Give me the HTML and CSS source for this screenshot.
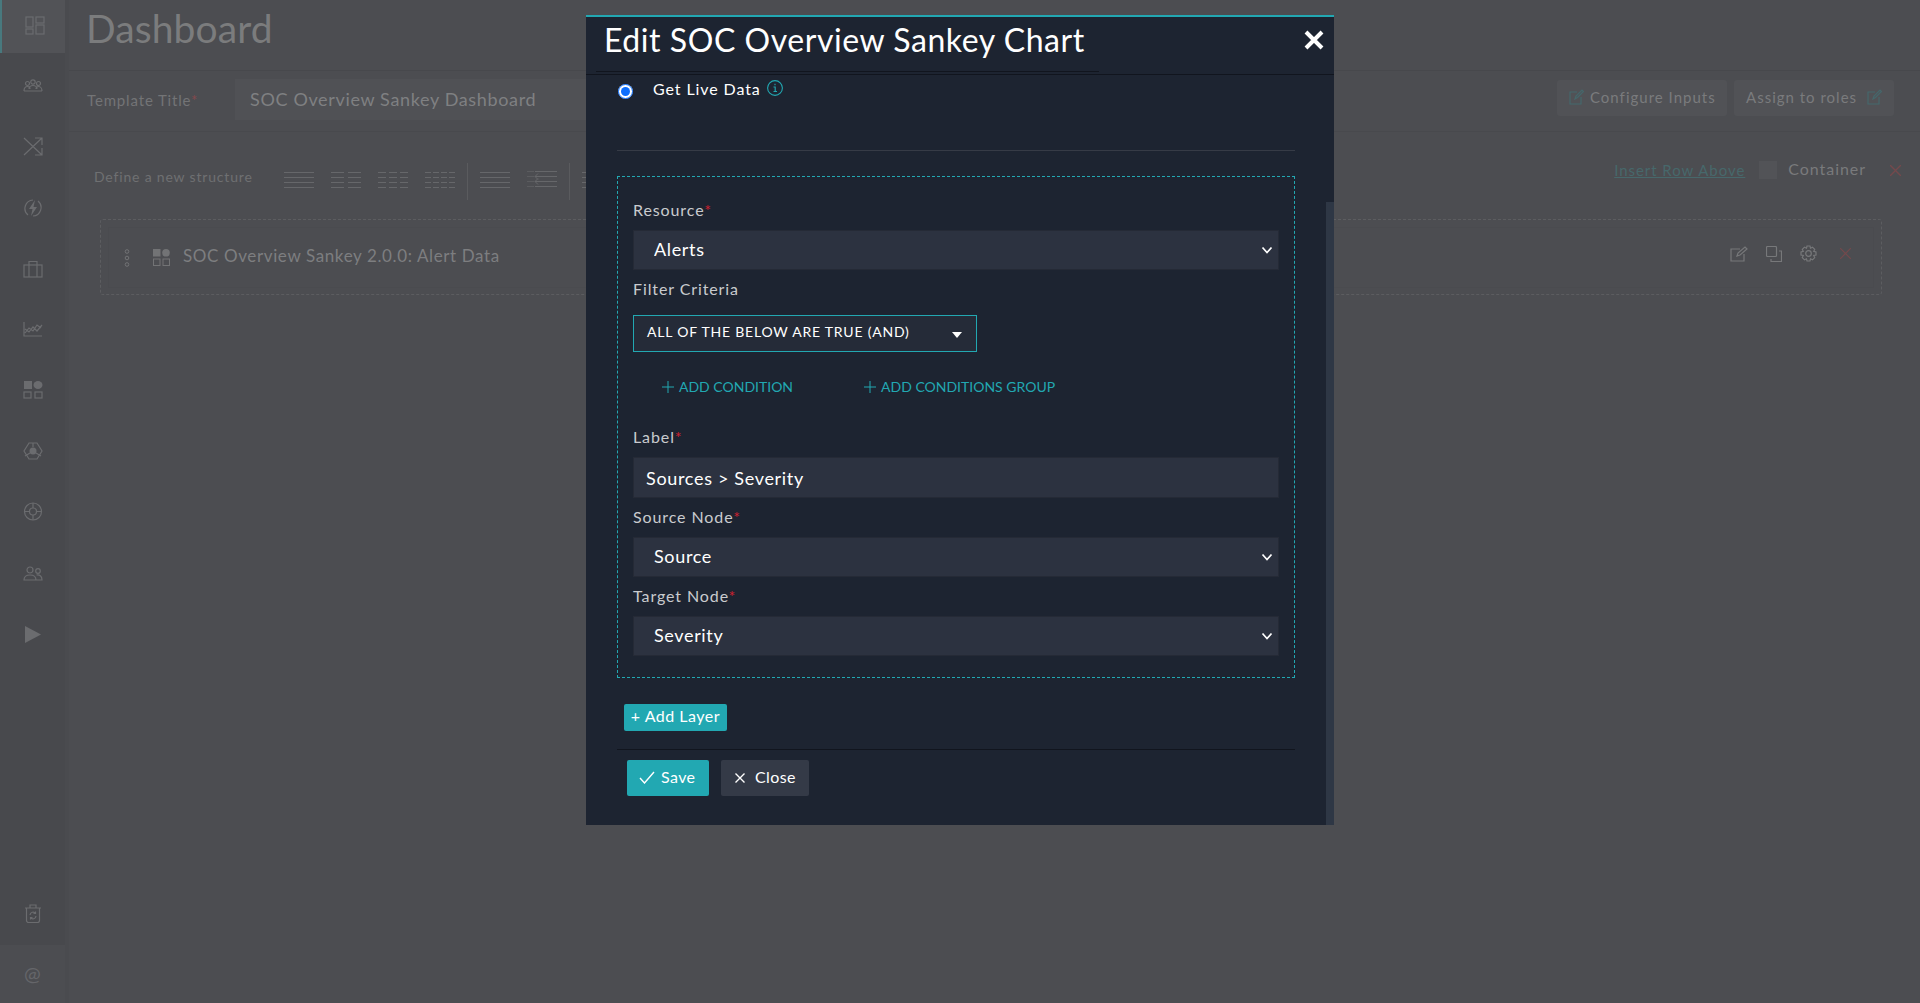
FILE: index.html
```html
<!DOCTYPE html>
<html>
<head>
    <title>Edit SOC Overview Sankey Chart</title>
    <link rel="stylesheet" href="styles.css">
</head>
<body>
    <div class="app">
        <nav class="sidebar">
            <a class="nav-item nav-active">
                <svg width="20" height="19" viewBox="0 0 20 19"><rect x="1" y="1" width="7" height="10"/><rect x="11" y="1" width="8" height="6"/><rect x="1" y="13" width="7" height="5"/><rect x="11" y="9" width="8" height="9"/></svg>
            </a>
            <a class="nav-item">
                <svg width="20" height="13" viewBox="0 0 20 13"><circle cx="10" cy="3" r="2.2"/><circle cx="4.5" cy="4.5" r="2"/><circle cx="15.500" cy="4.500" r="2"/><path d="M1 12c0-3 1.500-4.500 3.500-4.500S7 8.500 7 10M13 10c0-1.500 1-2.500 2.500-2.500S19 9 19 12M6 10c0-2 2-3.500 4-3.500S14 8 14 10M1 12h18"/></svg>
            </a>
            <a class="nav-item">
                <svg width="20" height="19" viewBox="0 0 20 19"><path d="M1 1l18 17M1 18L19 1M12 1h7v7M12 18h7v-7"/></svg>
            </a>
            <a class="nav-item">
                <svg width="20" height="20" viewBox="0 0 20 20"><path d="M5 17a8.500 8.500 0 0 1 5-15M15 3a8.500 8.500 0 0 1-5 15"/><path class="solid" d="M12 2L6 11h3.500L8 18l6-9h-3.500z"/></svg>
            </a>
            <a class="nav-item">
                <svg width="20" height="18" viewBox="0 0 20 18"><rect x="1" y="5" width="18" height="12"/><path d="M6 17V1.500h8V17"/></svg>
            </a>
            <a class="nav-item nav-up">
                <svg width="20" height="16" viewBox="0 0 20 16"><path d="M1 1v14h18M2 12l4-5 4 3 4-6 4 3M2 8l4 3 4-5 4 4 5-6"/></svg>
            </a>
            <a class="nav-item nav-up">
                <svg width="20" height="19" viewBox="0 0 20 19"><rect class="solid" x="1" y="1" width="8" height="8"/><ellipse class="solid" cx="15" cy="5" rx="4.500" ry="4"/><rect x="1" y="12" width="7" height="6"/><rect x="12" y="12" width="7" height="6"/></svg>
            </a>
            <a class="nav-item nav-up">
                <svg width="20" height="18" viewBox="0 0 20 18"><path d="M6 1h8l5 8-5 8H6L1 9z"/><circle class="solid" cx="10" cy="9" r="3.500"/><path d="M10 1v4M2 14l5-3M18 14l-5-3"/></svg>
            </a>
            <a class="nav-item nav-up">
                <svg width="20" height="19" viewBox="0 0 20 19"><circle cx="10" cy="9.500" r="8.500"/><circle cx="10" cy="9.500" r="3.500"/><path d="M10 1v5M10 13v5M1.500 9.500h5M13.500 9.500h5"/></svg>
            </a>
            <a class="nav-item">
                <svg width="20" height="15" viewBox="0 0 20 15"><circle cx="7" cy="4" r="3"/><circle cx="15" cy="5" r="2.300"/><path d="M1 14c0-3.500 2.500-5 6-5s6 1.500 6 5zM13.500 9c3.500-.5 5.500 1.500 5.500 5h-6"/></svg>
            </a>
            <a class="nav-item nav-play">
                <svg width="16" height="17" viewBox="0 0 16 17"><path class="solid" d="M0 0l16 8.500L0 17z"/></svg>
            </a>
            <div class="nav-spacer"></div>
            <a class="nav-item nav-trash">
                <svg width="16" height="19" viewBox="0 0 16 19"><path d="M1.500 4h13v12.500a2 2 0 0 1-2 2h-9a2 2 0 0 1-2-2zM5 4V1h6v3M0 4h16M5 11a3 3 0 0 1 5.500-1.500M11 12a3 3 0 0 1-5.500 1.500M10.500 7.500v2h-2M5.500 15.500v-2h2"/></svg>
            </a>
            <a class="nav-item nav-user">@</a>
        </nav>

        <main class="content">
            <header class="page-header">
                <h1>Dashboard</h1>
            </header>

            <section class="title-row">
                <label class="title-label">Template Title<span class="req">*</span></label>
                <div class="title-input">SOC Overview Sankey Dashboard</div>
                <button class="ghost-btn ghost-first">
                    <svg class="teal-icon" width="15" height="16" viewBox="0 0 15 16"><path d="M8 3H1v12h11V8M6 10l1-3 6-6 1.500 1.500-6 6z"/></svg>
                    Configure Inputs
                </button>
                <button class="ghost-btn ghost-second">
                    Assign to roles
                    <svg class="teal-icon" width="15" height="16" viewBox="0 0 15 16"><path d="M8 3H1v12h11V8M6 10l1-3 6-6 1.500 1.500-6 6z"/></svg>
                </button>
            </section>

            <section class="structure-row">
                <span class="structure-text">Define a new structure</span>
                <div class="layouts">
                    <span class="layout l1"></span>
                    <span class="layout l2"></span>
                    <span class="layout l3"></span>
                    <span class="layout l4"></span>
                    <span class="layout-sep"></span>
                    <span class="layout l1"></span>
                    <svg class="layout-indent" width="30" height="17" viewBox="0 0 30 17"><path class="faint" d="M0 .5h7M0 5.500h7M0 10.500h7M0 15.500h7"/><path d="M8 .5h22M8 5.500h22M8 10.500h22M8 15.500h22M11 2.500L8 5.500l3 3M11 7.500l-3 3 3 3"/></svg>
                    <span class="layout-sep"></span>
                    <span class="layout l3"></span>
                </div>
                <div class="row-actions">
                    <a class="insert-link">Insert Row Above</a>
                    <span class="fake-check"></span>
                    <span class="container-text">Container</span>
                    <svg class="red-x" width="11" height="11" viewBox="0 0 11 11"><path d="M0 0l11 11M11 0L0 11"/></svg>
                </div>
            </section>

            <div class="widget-outer">
                <div class="widget-inner">
                    <svg class="drag-dots" width="6" height="18" viewBox="0 0 6 18"><circle cx="3" cy="2.500" r="1.800"/><circle cx="3" cy="9" r="1.800"/><circle cx="3" cy="15.500" r="1.800"/></svg>
                    <svg class="widget-icon" width="17" height="17" viewBox="0 0 17 17"><rect class="solid" x="0" y="0" width="7.500" height="7.500"/><circle class="solid" cx="13" cy="3.800" r="3.800"/><rect x=".5" y="10" width="6.500" height="6.500"/><rect x="10" y="10" width="6.500" height="6.500"/></svg>
                    <span class="widget-name">SOC Overview Sankey 2.0.0: Alert Data</span>
                    <div class="widget-tools">
                        <svg width="18" height="16" viewBox="0 0 18 16"><path d="M10 3H1v12h13V8M7 10l1-3 7-6 2 2-7 6z"/></svg>
                        <svg width="16" height="16" viewBox="0 0 16 16"><rect x=".5" y=".5" width="10" height="10" rx="1"/><path d="M13 5h2.500v10.500H5V13"/></svg>
                        <svg width="17" height="17" viewBox="0 0 17 17"><circle cx="8.500" cy="8.500" r="2.800"/><path d="M7 1h3l.5 2.200 2-1 2.200 2.200-1 2 2.300.6v3l-2.300.5 1 2.100-2.200 2.200-2-1L10 16H7l-.5-2.200-2 1-2.200-2.200 1-2.100L1 10V7l2.300-.6-1-2 2.200-2.200 2 1z"/></svg>
                        <svg class="red-x" width="11" height="11" viewBox="0 0 11 11"><path d="M0 0l11 11M11 0L0 11"/></svg>
                    </div>
                </div>
            </div>
        </main>
    </div>

    <div class="modal">
        <div class="modal-header">
            <h4 class="modal-title">Edit SOC Overview Sankey Chart</h4>
            <button class="modal-close" aria-label="Close">
                <svg width="20" height="20" viewBox="0 0 20 20"><path d="M2 2l16 16M18 2L2 18"/></svg>
            </button>
        </div>

        <div class="modal-body">
            <div class="radio-row">
                <input type="radio" name="dataSource" checked>
                <span class="radio-text">Get Live Data</span>
                <svg class="info-icon" width="16" height="16" viewBox="0 0 16 16"><circle cx="8" cy="8" r="7.400"/><path d="M6.500 7H8.200v4.500M6.500 11.500h3.500M8 3.800v1.500"/></svg>
            </div>
            <hr class="divider">

            <div class="layer-box">
                <label class="field-label label-first">Resource<span class="req">*</span></label>
                <div class="select-wrap">
                    <select><option>Alerts</option></select>
                    <svg class="chevron" width="12" height="8" viewBox="0 0 12 8"><path d="M1.500 1.500L6 6.500l4.500-5"/></svg>
                </div>

                <label class="field-label">Filter Criteria</label>
                <button class="criteria-btn">
                    ALL OF THE BELOW ARE TRUE (AND)
                    <span class="caret"></span>
                </button>
                <div class="add-links">
                    <a class="add-link add-condition"><svg width="12" height="12" viewBox="0 0 12 12"><path d="M6 0v12M0 6h12"/></svg>ADD CONDITION</a>
                    <a class="add-link"><svg width="12" height="12" viewBox="0 0 12 12"><path d="M6 0v12M0 6h12"/></svg>ADD CONDITIONS GROUP</a>
                </div>

                <label class="field-label label-wide">Label<span class="req">*</span></label>
                <input class="text-input" type="text" value="Sources &gt; Severity">

                <label class="field-label">Source Node<span class="req">*</span></label>
                <div class="select-wrap">
                    <select><option>Source</option></select>
                    <svg class="chevron" width="12" height="8" viewBox="0 0 12 8"><path d="M1.500 1.500L6 6.500l4.500-5"/></svg>
                </div>

                <label class="field-label label-target">Target Node<span class="req">*</span></label>
                <div class="select-wrap select-last">
                    <select><option>Severity</option></select>
                    <svg class="chevron" width="12" height="8" viewBox="0 0 12 8"><path d="M1.500 1.500L6 6.500l4.500-5"/></svg>
                </div>
            </div>

            <button class="add-layer">+ Add Layer</button>
            <hr class="footer-line">
            <div class="footer-btns">
                <button class="btn-save">
                    <svg width="16" height="13" viewBox="0 0 16 13"><path d="M1 7l4.500 5L15 1"/></svg>
                    Save
                </button>
                <button class="btn-close">
                    <svg width="10" height="10" viewBox="0 0 10 10"><path d="M.5.500l9 9M9.500.500l-9 9"/></svg>
                    Close
                </button>
            </div>
        </div>
        <div class="scroll-thumb"></div>
    </div>
</body>
</html>
```

FILE: styles.css
```css
* {
    box-sizing: border-box;
}
html, body {
    height: 100%;
    margin: 0;
    overflow: hidden;
}
body {
    font-family: Lato, "Open Sans", sans-serif;
    background-color: #4c4d51;
    color: #77787a;
}
button, input, select {
    font-family: inherit;
}
.req {
    color: #d0202f;
}
.app {
    display: flex;
    height: 100vh;
}

/* dimmed page behind the dialog */
.sidebar {
    width: 69px;
    flex: none;
    display: flex;
    flex-direction: column;
    background-color: #48494d;
    border-right: 4px solid #4a4b4f;
}
.nav-item {
    height: 61px;
    flex: none;
    display: flex;
    align-items: center;
    padding-left: 23px;
}
.nav-item svg {
    fill: none;
    stroke: #6b6c6f;
    stroke-width: 1.2;
}
.nav-item svg .solid {
    fill: #6b6c6f;
    stroke: none;
}
.nav-active {
    height: 53px;
    padding-left: 23px;
    padding-bottom: 2px;
    margin-bottom: 2px;
    background-color: #525357;
    border-left: 2px solid #48797e;
}
.nav-up {
    padding-bottom: 2px;
}
.nav-play {
    padding-left: 25px;
}
.nav-spacer {
    flex: 1;
}
.nav-trash {
    height: 58px;
    padding-left: 25px;
    padding-bottom: 5px;
}
.nav-user {
    height: 58px;
    padding-left: 24px;
    padding-bottom: 2px;
    background-color: #4c4d51;
    font-size: 20px;
    color: #65666a;
}
.content {
    flex: 1;
    min-width: 0;
}
.page-header {
    height: 71px;
    padding: 5px 0 0 17px;
    border-bottom: 1px solid #47484c;
}
.page-header h1 {
    margin: 0;
    font-size: 39px;
    line-height: 46px;
    font-weight: 400;
    letter-spacing: .1px;
    color: #7b7c7d;
}
.title-row {
    height: 61px;
    display: flex;
    align-items: flex-start;
    padding-right: 26px;
    border-bottom: 1px solid #48494d;
}
.title-label {
    width: 148px;
    margin: 19px 0 0 18px;
    font-size: 15px;
    line-height: 20px;
    letter-spacing: .85px;
    color: #737476;
}
.title-label .req {
    color: #85494d;
}
.title-input {
    width: 1090px;
    height: 41px;
    margin-top: 8px;
    padding-left: 15px;
    background-color: #505155;
    font-size: 18px;
    line-height: 40px;
    letter-spacing: .65px;
    color: #7f8082;
}
.ghost-btn {
    height: 36px;
    margin: 9px 0 0 7px;
    padding: 0 0 2px 12px;
    display: flex;
    align-items: center;
    gap: 6px;
    background-color: #515256;
    border: none;
    border-radius: 3px;
    font-size: 15px;
    letter-spacing: 1px;
    color: #7a7b7d;
}
.ghost-first {
    width: 170px;
    margin-left: auto;
}
.ghost-second {
    width: 160px;
    gap: 10px;
}
.teal-icon {
    fill: none;
    stroke: #45686c;
    stroke-width: 1.2;
}
.structure-row {
    height: 87px;
    display: flex;
    align-items: flex-start;
    padding-left: 25px;
}
.structure-text {
    width: 190px;
    flex: none;
    margin-top: 35px;
    font-size: 14px;
    line-height: 20px;
    letter-spacing: .82px;
    color: #6f7072;
}
.layouts {
    display: flex;
    align-items: center;
    gap: 17px;
    margin-top: 31px;
    height: 37px;
}
.layout {
    width: 30px;
    height: 16px;
    margin-bottom: 4px;
    background:
        repeating-linear-gradient(to bottom, #66676a 0, #66676a 1px, transparent 1px, transparent 5px);
}
.l2 {
    background:
        repeating-linear-gradient(to right, transparent 0, transparent 13px, #4c4d51 13px, #4c4d51 17px),
        repeating-linear-gradient(to bottom, #66676a 0, #66676a 1px, transparent 1px, transparent 5px);
}
.l3 {
    background:
        repeating-linear-gradient(to right, transparent 0, transparent 8px, #4c4d51 8px, #4c4d51 11px),
        repeating-linear-gradient(to bottom, #66676a 0, #66676a 1px, transparent 1px, transparent 5px);
}
.l4 {
    background:
        repeating-linear-gradient(to right, transparent 0, transparent 6px, #4c4d51 6px, #4c4d51 8px),
        repeating-linear-gradient(to bottom, #66676a 0, #66676a 1px, transparent 1px, transparent 5px);
}
.layout-indent {
    margin-bottom: 4px;
    fill: none;
    stroke: #66676a;
}
.layout-indent .faint {
    stroke: #5b5c5f;
}
.layout-sep {
    width: 1px;
    height: 37px;
    margin: 0 -5px;
    background-color: #5a5b5e;
}
.row-actions {
    margin-left: auto;
    margin-top: 29px;
    display: flex;
    align-items: center;
    height: 18px;
    padding-right: 19px;
}
.insert-link {
    padding-bottom: 1px;
    font-size: 15px;
    letter-spacing: .95px;
    color: #47686b;
    text-decoration: underline;
}
.fake-check {
    width: 18px;
    height: 18px;
    margin-left: 14px;
    background-color: #525357;
}
.container-text {
    margin: 0 24px 0 11px;
    padding-bottom: 3px;
    font-size: 16px;
    letter-spacing: .95px;
    color: #797a7c;
}
.red-x {
    fill: none;
    stroke: #74494c;
    stroke-width: 1.4;
}
.widget-outer {
    margin: 0 38px 0 31px;
    height: 76px;
    padding: 7px;
    border: 1px dashed #5c5d60;
    border-radius: 3px;
}
.widget-inner {
    height: 61px;
    display: flex;
    align-items: center;
    border: 1px solid #4a4b4f;
    padding-left: 15px;
}
.drag-dots, .widget-icon {
    fill: none;
    stroke: #727375;
}
.widget-icon {
    margin-left: 23px;
}
.widget-icon .solid {
    fill: #727375;
    stroke: none;
}
.widget-name {
    margin: 0 0 4px 13px;
    font-size: 17px;
    letter-spacing: .62px;
    color: #7d7e80;
}
.widget-tools {
    margin: 0 0 8px auto;
    display: flex;
    align-items: center;
    gap: 18px;
    padding-right: 22px;
}
.widget-tools svg {
    fill: none;
    stroke: #77787a;
    stroke-width: 1.2;
}
.widget-tools .red-x {
    margin-left: 5px;
    stroke: #74494c;
}

/* dialog */
.modal {
    position: absolute;
    left: 586px;
    top: 15px;
    width: 748px;
    height: 810px;
    display: flex;
    flex-direction: column;
    background-color: #1d2431;
    border-top: 2px solid #22a8b2;
    color: #fff;
}
.modal-header {
    height: 58px;
    flex: none;
    display: flex;
    align-items: flex-start;
    border-bottom: 1px solid #11151e;
}
.modal-title {
    width: 503px;
    height: 55px;
    margin: 0 0 0 10px;
    padding: 3px 0 0 8px;
    border-bottom: 1px solid #11151e;
    font-size: 32px;
    line-height: 40px;
    font-weight: 400;
    letter-spacing: .55px;
}
.modal-close {
    margin: 12px 0 0 auto;
    padding: 0;
    width: 30px;
    height: 24px;
    background: none;
    border: none;
    text-align: left;
}
.modal-close svg {
    fill: none;
    stroke: #fff;
    stroke-width: 4;
}
.modal-body {
    flex: 1;
    padding: 0 39px 0 31px;
}
.radio-row {
    display: flex;
    align-items: center;
    height: 16px;
    margin-top: 5px;
}
.radio-row input {
    width: 15px;
    height: 15px;
    margin: 6px 0 0 1px;
    accent-color: #0d6efd;
}
.radio-text {
    margin-left: 20px;
    font-size: 16px;
    letter-spacing: .9px;
    color: #fff;
}
.info-icon {
    margin-left: 6px;
    fill: none;
    stroke: #22a8b2;
    stroke-width: 1.1;
}
.divider {
    height: 1px;
    margin: 54px 0 25px;
    border: none;
    background-color: #363b46;
}
.layer-box {
    height: 502px;
    padding: 0 15px;
    border: 1px dashed #22a8b2;
}
.field-label {
    display: block;
    height: 20px;
    margin-top: 9px;
    font-size: 16px;
    line-height: 20px;
    letter-spacing: .9px;
    color: #c9cbce;
}
.label-first {
    margin-top: 23px;
}
.label-wide {
    margin-top: 30px;
}
.select-wrap {
    position: relative;
    margin-top: 10px;
}
.select-wrap select {
    display: block;
    width: 100%;
    height: 40px;
    padding: 0 0 3px 20px;
    appearance: none;
    background-color: #2c3240;
    border: 1px solid #252a36;
    border-radius: 0;
    font-size: 18px;
    letter-spacing: .65px;
    color: #fff;
}
.chevron {
    position: absolute;
    right: 6px;
    top: 16px;
    fill: none;
    stroke: #fff;
    stroke-width: 1.7;
}
.criteria-btn {
    display: flex;
    align-items: center;
    justify-content: space-between;
    width: 344px;
    height: 37px;
    margin-top: 16px;
    padding: 0 14px 4px 13px;
    background-color: #252b38;
    border: 1px solid #22a8b2;
    font-size: 14px;
    letter-spacing: .78px;
    color: #fff;
}
.caret {
    width: 0;
    height: 0;
    margin-top: 6px;
    border-left: 5px solid transparent;
    border-right: 5px solid transparent;
    border-top: 6px solid #fff;
}
.add-links {
    display: flex;
    height: 20px;
    margin-top: 25px;
    padding-left: 29px;
    padding-bottom: 2px;
}
.add-link {
    display: flex;
    align-items: center;
    gap: 5px;
    font-size: 14px;
    letter-spacing: 0;
    color: #22a8b2;
}
.add-link svg {
    margin-top: 2px;
    fill: none;
    stroke: #22a8b2;
}
.add-condition {
    margin-right: 71px;
}
.text-input {
    display: block;
    width: 100%;
    height: 41px;
    margin-top: 10px;
    padding: 0 12px;
    background-color: #2c3240;
    border: 1px solid #252a36;
    outline: none;
    font-size: 18px;
    letter-spacing: .68px;
    color: #fff;
}
.add-layer {
    display: block;
    width: 103px;
    height: 27px;
    margin: 26px 0 0 7px;
    padding: 0 0 4px;
    background-color: #22a8b2;
    border: none;
    border-radius: 2px;
    font-size: 16px;
    letter-spacing: .5px;
    color: #fff;
}
.footer-line {
    height: 1px;
    margin: 18px 0 10px;
    border: none;
    background-color: #11151e;
}
.footer-btns {
    display: flex;
    gap: 12px;
    margin-left: 10px;
}
.footer-btns button {
    display: flex;
    align-items: center;
    height: 36px;
    padding-bottom: 4px;
    border: none;
    border-radius: 2px;
    font-size: 16px;
    letter-spacing: .4px;
    color: #fff;
}
.footer-btns svg {
    margin-top: 2px;
    fill: none;
    stroke: #fff;
    stroke-width: 1.4;
}
.btn-save {
    width: 82px;
    padding-left: 12px;
    padding-right: 0;
    gap: 6px;
    background-color: #22a8b2;
}
.btn-close {
    width: 88px;
    padding-left: 14px;
    padding-right: 0;
    gap: 10px;
    background-color: #343a47;
}
.scroll-thumb {
    position: absolute;
    right: 0;
    top: 185px;
    bottom: 0;
    width: 8px;
    background-color: #2e3745;
}
```
